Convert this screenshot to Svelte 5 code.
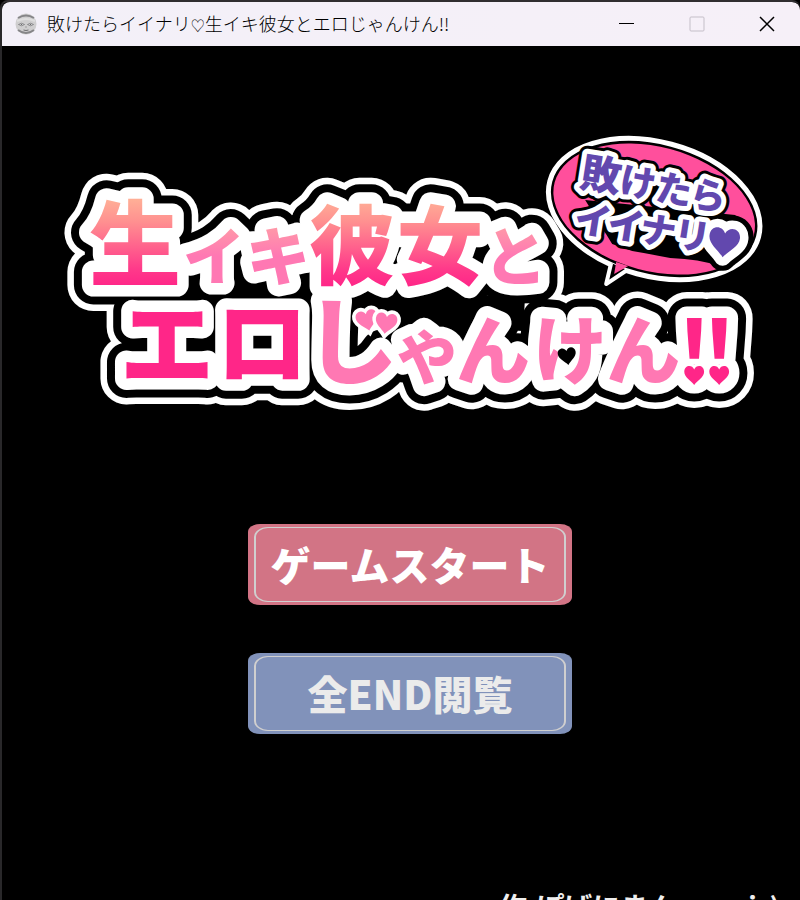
<script lang="ts">
  interface Glyph {
    char: string;
    x: number;
    y: number;
    size: number;
    fill: 'sunset' | 'soft' | 'hot' | 'pink';
    tilt?: number;
  }

  interface Action {
    label: string;
    kind: 'start' | 'endings';
  }

  const appTitle = ['敗けたらイイナリ', '♡', '生イキ彼女とエロじゃんけん!!'];

  // x, y is the centre of each em box
  const glyphs: Glyph[] = [
    { char: '生', x: 135, y: 243, size: 92, fill: 'sunset' },
    { char: 'イ', x: 214, y: 256, size: 62, fill: 'soft' },
    { char: 'キ', x: 278, y: 256, size: 64, fill: 'soft', tilt: -2 },
    { char: '彼', x: 352, y: 245, size: 86, fill: 'sunset' },
    { char: '女', x: 440, y: 245, size: 86, fill: 'sunset' },
    { char: 'と', x: 515, y: 256, size: 64, fill: 'soft' },
    { char: 'エ', x: 167, y: 343, size: 94, fill: 'hot' },
    { char: 'ロ', x: 262, y: 342, size: 92, fill: 'hot' },
    { char: 'し', x: 351, y: 341, size: 94, fill: 'pink' },
    { char: 'や', x: 427, y: 357, size: 60, fill: 'pink', tilt: -4 },
    { char: 'ん', x: 493, y: 350, size: 74, fill: 'pink' },
    { char: 'け', x: 570, y: 350, size: 74, fill: 'pink' },
    { char: 'ん', x: 643, y: 350, size: 74, fill: 'pink' },
    { char: '!', x: 694, y: 350, size: 82, fill: 'hot' },
    { char: '!', x: 719, y: 350, size: 82, fill: 'hot' }
  ];

  const balloonGlyphs = [
    { char: '敗', x: 601, y: 174, size: 41 },
    { char: 'け', x: 638, y: 182, size: 36 },
    { char: 'た', x: 674, y: 189, size: 36 },
    { char: 'ら', x: 708, y: 195, size: 36 },
    { char: 'イ', x: 593, y: 220, size: 37 },
    { char: 'イ', x: 626, y: 225, size: 37 },
    { char: 'ナ', x: 658, y: 230, size: 36 },
    { char: 'リ', x: 692, y: 235, size: 36 }
  ];

  const actions: Action[] = [
    { label: 'ゲームスタート', kind: 'start' },
    { label: '全END閲覧', kind: 'endings' }
  ];
</script>

<div class="window">
  <header class="titlebar">
    <svg class="app-icon" viewBox="0 0 22 22" aria-hidden="true">
      <circle cx="11" cy="11" r="10.5" fill="#cfcecf" />
      <path d="M3 5Q11 0 19 5M3 17Q11 23 19 17" fill="none" stroke="#858587" stroke-width="2" />
      <path d="M2 8Q11 4 20 8" fill="none" stroke="#dedede" stroke-width="2" />
      <path d="M3.5 11.500q3-2.500 6 0q-3 2.500-6 0M12.500 11.500q3-2.500 6 0q-3 2.500-6 0" fill="#e8e8e8" stroke="#858587" />
      <path d="M6 11.500h1M15 11.500h1M10.500 14h1M8.500 17q2.500 1 5 0" stroke="#6c6c6e" fill="none" />
    </svg>
    <h1>{appTitle[0]}<span class="title-heart">{appTitle[1]}</span>{appTitle[2]}</h1>
    <div class="controls">
      <button aria-label="最小化">
        <svg viewBox="0 0 16 16"><path d="M0 7.500h15" /></svg>
      </button>
      <button aria-label="最大化" disabled>
        <svg viewBox="0 0 16 16"><rect x="1" y="1" width="14" height="14" rx="1" /></svg>
      </button>
      <button aria-label="閉じる">
        <svg viewBox="0 0 16 16"><path d="M1 1l14 14M15 1L1 15" /></svg>
      </button>
    </div>
  </header>

  <main>
    <svg class="logo" viewBox="60 130 710 285" role="img" aria-label="敗けたらイイナリ♡生イキ彼女とエロじゃんけん!!">
      <defs>
        <linearGradient id="sunset" gradientUnits="userSpaceOnUse" x1="0" y1="200" x2="0" y2="286">
          <stop offset="0" stop-color="#ffae96" />
          <stop offset="0.25" stop-color="#ff9090" />
          <stop offset="0.8" stop-color="#ff3a8a" />
          <stop offset="1" stop-color="#ff2688" />
        </linearGradient>
        <linearGradient id="soft" gradientUnits="userSpaceOnUse" x1="0" y1="222" x2="0" y2="256">
          <stop offset="0" stop-color="#ff9fa6" />
          <stop offset="1" stop-color="#ff78b3" />
        </linearGradient>
        <path id="heart" d="M0 9C-3 5-9 2-9-3C-9-9-2-10 0-5C2-10 9-9 9-3C9 2 3 5 0 9Z" />
        <g id="title">
          {#each glyphs as g}
            <text
              class="glyph {g.fill}"
              x={g.x}
              y={g.y + g.size * 0.38}
              font-size={g.size}
              transform="rotate({g.tilt ?? 0} {g.x} {g.y})">{g.char}</text>
          {/each}
        </g>
        <g id="balloon-text">
          {#each balloonGlyphs as g}
            <text
              class="glyph"
              x={g.x}
              y={g.y + g.size * 0.38}
              font-size={g.size}
              transform="rotate(9 {g.x} {g.y})">{g.char}</text>
          {/each}
          <use href="#heart" transform="translate(724 242) rotate(6) scale(1.7)" />
        </g>
      </defs>

      <use href="#title" class="ring-outer" />
      <use href="#title" class="ring-gap" />
      <path class="row-gap" d="M150 300L400 308L524 314" />
      <use href="#title" class="ring-inner" />
      <use href="#title" class="ink" />

      <g class="heart-cut">
        <use href="#heart" transform="translate(367 320) rotate(-12) scale(1.2)" />
        <use href="#heart" transform="translate(386 323) rotate(8) scale(1.2)" />
      </g>
      <g class="heart-dot">
        <use href="#heart" transform="translate(694 375) scale(1.1)" />
        <use href="#heart" transform="translate(719 375) scale(1.1)" />
      </g>
      <use href="#heart" transform="translate(567 356) rotate(-8)" fill="#000" />

      <ellipse class="balloon-rim" cx="654" cy="209" rx="108" ry="67" transform="rotate(15 654 209)" />
      <path class="balloon-tail" d="M611 263L606 284L627 270" />
      <ellipse class="balloon" cx="654" cy="209" rx="103" ry="62" transform="rotate(15 654 209)" />
      <path class="balloon-tail-fill" d="M616 262L614 274L628 266Z" />
      <path class="balloon-shade" d="M585 200L735 215L748 244Q738 260 718 266Q700 259 670 258Q650 254 632 251L612 244Z" />
      <use href="#balloon-text" class="balloon-edge" />
      <use href="#balloon-text" class="balloon-white" />
      <use href="#balloon-text" class="balloon-ink" />
    </svg>

    <nav>
      {#each actions as action}
        <button class="action {action.kind}"><span>{action.label}</span></button>
      {/each}
    </nav>
  </main>

  <footer>
    <span>作:ぽばにまん</span>
    <span>i&nbsp;&nbsp;)</span>
  </footer>
</div>

<style>
  :global(body) {
    margin: 0;
    background: #000;
    overflow: hidden;
  }

  .window {
    box-sizing: border-box;
    height: 100vh;
    display: flex;
    flex-direction: column;
    overflow: hidden;
    background: #000;
    border-top: 2px solid #302e30;
    border-left: 2px solid #29282a;
    border-radius: 8px 8px 0 0;
    font-family: 'Noto Sans CJK JP', sans-serif;
  }

  .titlebar {
    flex: none;
    display: flex;
    align-items: center;
    height: 44px;
    padding-left: 13px;
    background: linear-gradient(90deg, #f3f0f8, #f6f0f8);
    border-radius: 8px 8px 0 0;
  }

  .app-icon {
    width: 22px;
    height: 22px;
    margin-right: 10px;
  }

  h1 {
    flex: 1;
    margin: 0;
    font-size: 18px;
    font-weight: 300;
    line-height: 24px;
    color: #000;
    white-space: nowrap;
  }

  .title-heart {
    font-size: 14px;
  }

  .controls {
    display: flex;
  }

  .controls button {
    display: flex;
    align-items: center;
    justify-content: center;
    box-sizing: border-box;
    width: 70px;
    height: 44px;
    padding: 0 0 0 4px;
    border: none;
    background: none;
  }

  .controls svg {
    width: 16px;
    height: 16px;
    fill: none;
    stroke: #000;
  }

  .controls button:last-child svg {
    stroke-width: 1.5px;
  }

  .controls button:disabled svg {
    stroke: #c4bfc8;
  }

  .controls button:hover:not(:disabled) {
    background: #e4e0ea;
  }

  main {
    flex: none;
    display: flex;
    flex-direction: column;
    align-items: center;
    padding-top: 84px;
  }

  .logo {
    display: block;
    width: 89%;
    margin-left: 28px;
  }

  .glyph {
    font-weight: 900;
    text-anchor: middle;
    stroke-linejoin: round;
  }

  .sunset { fill: url(#sunset); }
  .soft { fill: url(#soft); }
  .hot { fill: #ff2688; }
  .pink { fill: #ff78b3; }

  .ring-outer { stroke: #fff; stroke-width: 52px; }
  .ring-gap { stroke: #000; stroke-width: 39px; }
  .ring-inner { stroke: #fff; stroke-width: 23px; }

  .row-gap {
    fill: none;
    stroke: #000;
    stroke-width: 34px;
  }

  .heart-cut,
  .heart-dot {
    stroke: #fff;
    stroke-width: 6px;
    paint-order: stroke;
  }

  .heart-cut { fill: #ff78b3; }
  .heart-dot { fill: #ff2688; }

  .balloon-rim {
    fill: #000;
    stroke: #fff;
    stroke-width: 5px;
  }

  .balloon-tail {
    fill: #000;
    stroke: #fff;
    stroke-width: 4px;
    stroke-linejoin: round;
  }

  .balloon,
  .balloon-tail-fill {
    fill: #ff4f9c;
  }

  .balloon-edge { fill: #000; stroke: #000; stroke-width: 16px; stroke-linejoin: round; }
  .balloon-white { fill: #fff; stroke: #fff; stroke-width: 10px; stroke-linejoin: round; }
  .balloon-ink { fill: #6248ae; }

  nav {
    display: flex;
    flex-direction: column;
    gap: 48px;
    margin: 109px 0 0 18px;
  }

  .action {
    display: flex;
    width: 324px;
    height: 81px;
    padding: 3px 6px;
    border: none;
    border-radius: 12px / 8px;
    font-family: inherit;
    font-size: 40px;
    font-weight: 900;
    line-height: 72px;
    cursor: pointer;
  }

  .action span {
    flex: 1;
    border: solid #d0cfcf;
    border-width: 1px 2px;
    border-radius: 14px / 10px;
  }

  .start {
    background: #d27485;
    color: #fff;
  }

  .endings {
    background: #8192ba;
    color: #ebebeb;
  }

  .action:hover {
    filter: brightness(1.08);
  }

  footer {
    flex: none;
    display: flex;
    justify-content: flex-end;
    gap: 72px;
    margin-top: 152px;
    padding-right: 20px;
    font-size: 28px;
    font-weight: 700;
    line-height: 40px;
    color: #eee;
    white-space: nowrap;
  }
</style>
